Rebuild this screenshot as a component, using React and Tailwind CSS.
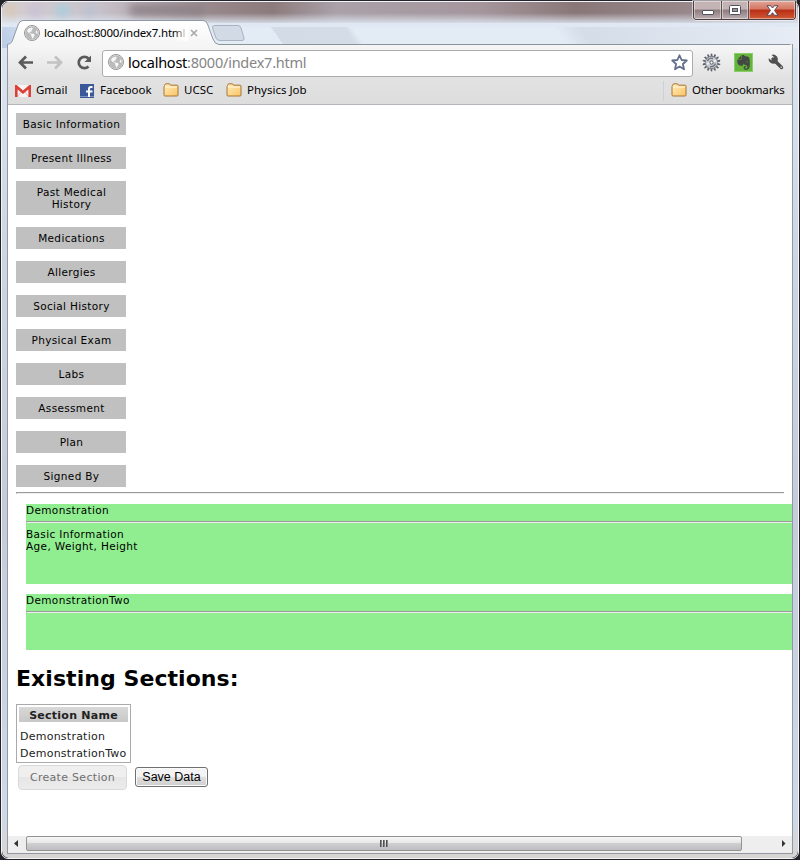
import React from "react";
import { FaEvernote, FaWrench, FaGlobeAmericas } from "react-icons/fa";

const UI = "font-['Noto_Sans',sans-serif]";
const VERDANA = "font-['DejaVu_Sans',sans-serif]";

const SECTIONS = [
  "Basic Information", "Present Illness", "Past Medical History", "Medications", "Allergies",
  "Social History", "Physical Exam", "Labs", "Assessment", "Plan", "Signed By",
];

function Globe() {
  return (
    <span className="flex h-4 w-4 shrink-0 items-center justify-center rounded-full border border-[#959595] bg-[#f8f8f8]">
      <FaGlobeAmericas size={14} color="#bababa" />
    </span>
  );
}

function Folder() {
  return (
    <svg className="-mt-[2px] shrink-0" width="16" height="14" viewBox="0 0 16 14">
      <defs>
        <linearGradient id="folder" x1="0" y1="0" x2="1" y2="1">
          <stop offset="0" stopColor="#ffedbd" />
          <stop offset="1" stopColor="#f9c465" />
        </linearGradient>
      </defs>
      <path d="M1.5 2.5 L2.5 .8 H6.5 L7.5 2.2 H14 Q15 2.2 15 3.2 V12 Q15 13 14 13 H2 Q1 13 1 12 V3.5Z" fill="url(#folder)" stroke="#a97432" />
      <path d="M2 4 H14" stroke="#fff6da" />
    </svg>
  );
}

function Gmail() {
  return (
    <svg className="-mt-[1px] shrink-0" width="16" height="12" viewBox="0 0 16 12">
      <rect x="0" y="0" width="16" height="12" rx="1" fill="#fbf3f2" />
      <path d="M2 12 L7 6 M14 12 L9 6" stroke="#d9b6b3" strokeWidth=".8" />
      <path d="M1.3 12 V1.4 L8 7.3 L14.700 1.4 V12" fill="none" stroke="#dc3f38" strokeWidth="2.600" />
    </svg>
  );
}

function Facebook() {
  return (
    <svg className="-mt-[1px] shrink-0" width="14" height="14" viewBox="0 0 14 14">
      <rect width="14" height="14" fill="#3b5998" />
      <rect y="12" width="14" height="1" fill="#7d92bd" />
      <path d="M12.500 3 H11 Q9 3 9 5 V13 M6 7.500 H12.500" fill="none" stroke="#fff" strokeWidth="2" />
    </svg>
  );
}

function Gear() {
  const teeth = Array.from({ length: 14 }, (_, i) => (i * 360) / 14);
  return (
    <svg width="19" height="19" viewBox="0 0 19 19">
      {teeth.map((a) => (
        <path key={a} d="M8.900 0.200 L10.500 1.200 L10.300 4 H8.500Z" fill="#5c6068" transform={`rotate(${a} 9.5 9.5)`} />
      ))}
      <circle cx="9.5" cy="9.5" r="6.200" fill="#c9ccd3" stroke="#7a7e87" strokeWidth="1" />
      <path d="M5.500 8 A4.300 4.300 0 0 1 11 5.500 M13.500 10.500 A4.300 4.300 0 0 1 8 13.500" fill="none" stroke="#6e727b" strokeWidth="1.400" />
      <path d="M5 11 L14 7.500" stroke="#f1f2f5" strokeWidth="1.500" />
      <circle cx="9.5" cy="9.5" r="1.700" fill="#eee" stroke="#555a63" />
    </svg>
  );
}

function TabStrip() {
  return (
    <div className="relative h-[44px] shrink-0">
      <svg className="absolute left-0 top-0" width="800" height="45" viewBox="0 0 800 45">
        <defs>
          <linearGradient id="tab" x1="0" y1="0" x2="0" y2="1">
            <stop offset="0" stopColor="#fff" />
            <stop offset="1" stopColor="#f5f5f5" />
          </linearGradient>
        </defs>
        <path d="M7 44.5 C11 44 12 42 13 39 L18 25 Q19.5 20.5 23 20.5 H203 Q206 20.5 207.5 24 L213 39 Q215 44.5 219 44.5" fill="url(#tab)" stroke="#8e99a8" />
        <path d="M219 44.5 H789 Q793 44.5 793 48" fill="none" stroke="#899499" />
        <path d="M215 25.5 H238 Q240 25.5 241 28 L244 38 Q244.500 40.500 242 40.500 H220 Q217 40.500 216 38 L212.500 28 Q212 25.500 215 25.500Z" fill="#d2dae5" stroke="#a9b2c0" />
      </svg>
      <div className="absolute left-6 top-[25px] flex items-center"><Globe /></div>
      <span className={`${UI} absolute left-[44px] top-[24px] whitespace-nowrap text-[11.5px] leading-[18px] tracking-[-0.2px] text-black`}>localhost:8000/index7.html</span>
      <span className="absolute left-[174px] top-[24px] h-[17px] w-[14px] bg-gradient-to-r from-white/0 to-white" />
      <svg className="absolute left-[190px] top-[29px]" width="8" height="8" viewBox="0 0 8 8"><path d="M1 1 L7 7 M7 1 L1 7" stroke="#aaa" strokeWidth="1.7" /></svg>
      <div className="absolute right-[4px] top-[1px] flex h-[19px] w-[103px] overflow-hidden rounded-b-[4px] border border-t-0 border-[#4c3d40] shadow-[0_0_0_1px_#ffffff90]">
        <div className="flex w-[28px] items-center justify-center border-r border-[#5d4c50] bg-[linear-gradient(#c4b3b5_45%,#8d7a7d_50%,#bcaeb1)] shadow-[inset_0_0_0_1px_#ffffff70]">
          <span className="mt-1 h-[5px] w-[12px] rounded-[1px] border border-[#51525f] bg-white" />
        </div>
        <div className="flex w-[27px] items-center justify-center border-r border-[#5d4c50] bg-[linear-gradient(#c4b3b5_45%,#8d7a7d_50%,#bcaeb1)] shadow-[inset_0_0_0_1px_#ffffff70]">
          <svg width="12" height="10" viewBox="0 0 12 10"><rect x=".5" y=".5" width="11" height="9" rx="1" fill="#fff" stroke="#51525f" /><rect x="3.500" y="3.500" width="5" height="3" fill="#a09397" stroke="#51525f" /></svg>
        </div>
        <div className="flex flex-1 items-center justify-center bg-[linear-gradient(#e3a496,#d27662_45%,#b92d14_50%,#cf5a35)] shadow-[inset_0_0_0_1px_#ffffff70]">
          <svg width="13" height="11" viewBox="0 0 13 11"><path d="M1 .7 H4.500 L6.500 3 L8.500 .7 H12 L8.500 5.400 L12 10.300 H8.500 L6.500 7.700 L4.500 10.300 H1 L4.500 5.400Z" fill="#fff" stroke="#5b4a5a" /></svg>
        </div>
      </div>
    </div>
  );
}

function Toolbar() {
  return (
    <div className="flex h-[33px] shrink-0 items-center pl-[10px]">
      <svg className="mt-[2px]" width="76" height="18" viewBox="0 0 76 18">
        <path d="M15 8.500 H3 M8 2.500 L2 8.500 L8 14.500" fill="none" stroke="#5a5a5a" strokeWidth="2.700" />
        <path d="M29 8.500 H42 M37 2.500 L43 8.500 L37 14.500" fill="none" stroke="#c2c2c2" strokeWidth="2.700" />
        <path d="M70.500 12.500 A5.700 5.700 0 1 1 70.500 4.500" fill="none" stroke="#5a5a5a" strokeWidth="2.700" />
        <path d="M73 1.500 V8 H66.500Z" fill="#5a5a5a" />
      </svg>
      <div className="ml-[8px] mt-[3px] flex h-[27px] w-[591px] items-center rounded-[3px] border border-[#aaadb0] bg-white pb-[2px] pl-[5px] pr-[4px]">
        <Globe />
        <span className={`${UI} ml-[4px] flex-1 text-[14.5px] leading-5 tracking-[-0.24px] text-black`}>localhost<span className="text-[#858585]">:8000/index7.html</span></span>
        <svg width="17" height="17" viewBox="0 0 17 17"><path d="M8.500 1.300 L10.600 6 L15.800 6.500 L11.900 10 L13 15.300 L8.500 12.600 L4 15.300 L5.100 10 L1.200 6.500 L6.400 6Z" fill="#fff" stroke="#626f8b" strokeWidth="1.800" strokeLinejoin="round" /></svg>
      </div>
      <div className="ml-[9px] mt-[1px] flex items-center">
        <Gear />
        <span className="ml-[13px] flex h-[19px] w-[19px] items-center justify-center border border-[#8ccc68] bg-[#65b53b]"><FaEvernote size={17} color="#424843" /></span>
        <svg className="ml-[15px]" width="16" height="16" viewBox="0 0 16 16">
          <path d="M5 5 L13.500 13.500" stroke="#505050" strokeWidth="3.400" strokeLinecap="round" />
          <path d="M3.500 1 A4.600 4.600 0 1 1 .8 4.200 L3.200 6.200 L5.800 5.400 L6 3Z" fill="#505050" />
          <circle cx="13.200" cy="13.200" r=".8" fill="#ddd" />
        </svg>
      </div>
    </div>
  );
}

function BookmarkBar() {
  const text = `${UI} -mt-[2px] whitespace-nowrap text-[11.5px] leading-[16px] text-black`;
  return (
    <div className="flex h-[27px] shrink-0 items-center border-b border-[#b3b5ba] pl-[7px] pr-[8px]">
      <Gmail /><span className={`${text} ml-[5px] w-[44px]`}>Gmail</span>
      <Facebook /><span className={`${text} ml-[6px] w-[63px]`}>Facebook</span>
      <Folder /><span className={`${text} ml-[5px] w-[42px]`}>UCSC</span>
      <Folder /><span className={`${text} ml-[5px]`}>Physics Job</span>
      <span className="ml-auto mr-[7px] h-5 border-l border-[#ccd2da]" />
      <Folder /><span className={`${text} ml-[5px] w-[92px] tracking-[-0.18px]`}>Other bookmarks</span>
    </div>
  );
}

function Rule() {
  return <div className="h-[2px] border-t border-t-[#9a9a9a] border-b border-b-[#eeeeee] border-l border-l-[#9a9a9a]" />;
}

function Panel({ title, lines, className }) {
  return (
    <div className={`${className} bg-[#90ee90]`}>
      <div className="mb-[5px] h-3">{title}</div>
      <Rule />
      <div className="pt-[5px]">{lines.map((l) => <div key={l}>{l}</div>)}</div>
    </div>
  );
}

function Page() {
  return (
    <div className={`${VERDANA} flex flex-1 flex-col overflow-hidden bg-white pt-[8px] text-black`}>
      <div className="ml-[8px] flex w-[110px] flex-col gap-[12px] text-center text-[10.5px] leading-[12px] tracking-[0.34px]">
        {SECTIONS.map((s) => <div key={s} className="bg-[#c0c0c0] py-[5px] pl-[6px] pr-[5px]">{s}</div>)}
      </div>
      <div className="ml-[8px] mr-[8px] mt-[5px]"><Rule /></div>
      <div className="ml-[18px] mt-[10px] flex flex-col gap-[10px] text-[10.5px] leading-[12px] tracking-[0.36px]">
        <Panel title="Demonstration" lines={["Basic Information", "Age, Weight, Height"]} className="h-[80px]" />
        <Panel title="DemonstrationTwo" lines={[]} className="h-[56px]" />
      </div>
      <h1 className="ml-[8px] mt-[15px] whitespace-nowrap text-[22px] font-bold leading-[28px] tracking-[0.06px]">Existing Sections:</h1>
      <div className="ml-[8px] mt-[11px] h-[59px] w-[115px] border border-[#aaaaaa] p-[2px] text-[11px] text-[#222222]">
        <div className="h-[15px] w-[109px] bg-[linear-gradient(#d8d8d8,#c8c8c8)] text-center font-bold leading-[17px] tracking-[0.25px]">Section Name</div>
        <div className="mt-[6px] whitespace-nowrap pl-[1px] leading-[17px] tracking-[0.24px]">
          <div>Demonstration</div>
          <div>DemonstrationTwo</div>
        </div>
      </div>
      <div className="ml-[10px] mt-[2px] flex items-start gap-[8px]">
        <button className="h-[25px] w-[109px] whitespace-nowrap rounded-[4px] border border-[#d9d9d9] bg-[linear-gradient(#efefef_50%,#e6e6e6_50%,#ececec)] pt-[2px] text-[11px] tracking-[0.3px] text-[#6f6f6f]">Create Section</button>
        <button className="mt-[2px] h-[20px] w-[73px] whitespace-nowrap rounded-[3px] border border-[#707070] bg-[linear-gradient(#f4f4f4_45%,#dddddd_55%,#cfcfcf)] font-['Liberation_Sans',Arial,sans-serif] text-[12.5px] leading-[18px] text-black shadow-[inset_0_0_0_1px_#fbfbfb]">Save Data</button>
      </div>
    </div>
  );
}

function Scrollbar() {
  return (
    <div className="flex h-[17px] shrink-0 items-start bg-[#eeeeee]">
      <svg className="ml-[6px] mt-[4px]" width="4" height="7" viewBox="0 0 4 7"><path d="M4 0 V7 L0 3.500Z" fill="#333" /></svg>
      <div className="ml-[8px] flex h-[15px] w-[716px] items-center justify-center gap-[1px] rounded-[2px] border border-[#939393] bg-[linear-gradient(#f6f6f6,#e7e7e8_45%,#cfcfd2_50%,#bdbdc2)]">
        {[0, 1, 2].map((i) => <span key={i} className="h-[7px] w-[2px] bg-[linear-gradient(90deg,#383838,#a0a0a0)]" />)}
      </div>
      <svg className="ml-[39px] mt-[4px]" width="5" height="7" viewBox="0 0 5 7"><path d="M1 0 V7 L4.500 3.500Z" fill="#333" /></svg>
    </div>
  );
}

function GlassFrame() {
  return (
    <div className="absolute inset-0 overflow-hidden rounded-[7px] bg-[linear-gradient(#e0e8f3,#ced6e4_28%,#c5cbd9_60%,#ced8e7_95%,#d8d5d3)]">
      <div className="h-[21px] bg-[linear-gradient(90deg,#d5ced1,#c9c3cb_12%,#96868a_27%,#8c7b7c_34%,#aaa1a9_42%,#a5969c_60%,#897778_72%,#9a8a8d_88%,#beb6ba)]" />
      <div className="-mt-[10px] h-[14px] bg-[linear-gradient(#e0e8f300,#e0e8f3_85%)]" />
      <div className="h-[21px] bg-[linear-gradient(55deg,#b8cae6,#e3ebf5_8%,#e3ebf5_35%,#d3dbe6_35%,#d4dce7_44%,#e3ebf5_45%,#e3ebf5_70%,#d4dde8_73%,#e7ecf5)]" />
      <div className="absolute left-[4px] top-[3px] flex gap-[14px] blur-[4px]">
        <span className="h-[11px] w-[9px] bg-[#d8c7ac]" /><span className="h-[11px] w-[13px] bg-[#c8bfd6]" />
        <span className="h-[11px] w-[13px] bg-[#a5cfe0]" /><span className="h-[11px] w-[13px] bg-[#b9c3d2]" />
        <span className="ml-[20px] h-[10px] w-[75px] bg-[#8b8085]" />
      </div>
    </div>
  );
}

export default function App() {
  return (
    <div className="relative h-[860px] w-[800px] overflow-hidden bg-[#25232a]">
      <div className="absolute bottom-[1px] left-[1px] right-[1px] top-[1px] overflow-hidden rounded-[7px] border border-[#f3f5f9]"><GlassFrame /></div>
      <div className="relative flex h-[860px] flex-col">
        <TabStrip />
        <div className="mx-[7px] flex h-[810px] flex-col border border-t-0 border-[#9298a2]">
          <div className="flex flex-col bg-[linear-gradient(#f7f7f7,#e2e2e2_55%,#dddddd)]">
            <div className="h-[1px]" />
            <Toolbar />
            <BookmarkBar />
          </div>
          <Page />
          <Scrollbar />
        </div>
      </div>
    </div>
  );
}
